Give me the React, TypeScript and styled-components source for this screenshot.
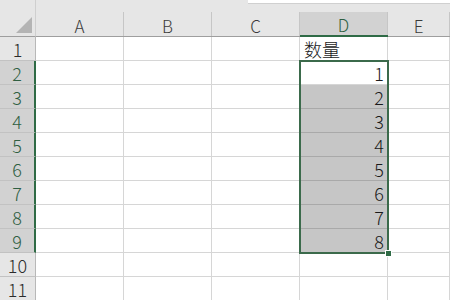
import React from "react";
import styled, { createGlobalStyle } from "styled-components";

const GlobalStyle = createGlobalStyle`
  html, body {
    margin: 0;
    padding: 0;
    background: #ffffff;
    overflow: hidden;
  }
  body {
    font-family: "Noto Sans CJK SC", "Noto Sans", "Liberation Sans", sans-serif;
    font-weight: 300;
  }
`;

const COLUMNS = ["A", "B", "C", "D", "E"];
const ROWS = [1, 2, 3, 4, 5, 6, 7, 8, 9, 10, 11];
const SEL_COL = "D";
const SEL_FIRST = 2;
const SEL_LAST = 9;

const Sheet = styled.div`
  position: relative;
  width: 450px;
  height: 300px;
  display: grid;
  grid-template-columns: 36px 88px 88px 88px 88px 62px;
  grid-template-rows: 37px repeat(11, 24px);
  overflow: hidden;
`;

const Corner = styled.div`
  background: #e6e6e6;
  border-right: 1px solid #cfcfcf;
  border-bottom: 1px solid #9e9e9e;
  box-sizing: border-box;
  display: flex;
  align-items: flex-end;
  justify-content: flex-end;
  padding: 0 3px 3px 0;
`;

const ColHead = styled.div<{ $active?: boolean; $tab?: number }>`
  background: #e6e6e6;
  box-sizing: border-box;
  padding-top: 12px;
  border-bottom: ${({ $active }) =>
    $active ? "2px solid #2f6b46" : "1px solid #9e9e9e"};
  position: relative;

  &::before {
    content: "";
    display: ${({ $tab }) => ($tab !== undefined ? "block" : "none")};
    position: absolute;
    left: ${({ $tab }) => $tab ?? 0}px;
    right: 0;
    top: 0;
    height: 3px;
    background: #ffffff;
    border-bottom: 1px solid #d0d0d0;
  }
`;

const ColLabel = styled.div<{ $active?: boolean }>`
  height: 100%;
  box-sizing: border-box;
  border-right: 1px solid #c6c6c6;
  background: ${({ $active }) => ($active ? "#d2d2d2" : "transparent")};
  color: ${({ $active }) => ($active ? "#2f5f42" : "#3a3a3a")};
  font-size: 17px;
  display: flex;
  align-items: center;
  justify-content: center;
  padding-top: 2px;
`;

const RowHead = styled.div<{ $active?: boolean }>`
  box-sizing: border-box;
  background: ${({ $active }) => ($active ? "#d2d2d2" : "#e6e6e6")};
  color: ${({ $active }) => ($active ? "#2f5f42" : "#2b2b2b")};
  border-bottom: 1px solid #c2c2c2;
  border-right: ${({ $active }) =>
    $active ? "2px solid #2f6b46" : "1px solid #b8b8b8"};
  font-size: 18px;
  display: flex;
  align-items: center;
  justify-content: center;
  line-height: 1;
  padding-top: 1px;
`;

const Cell = styled.div<{ $fill?: boolean; $align?: "left" | "right" }>`
  box-sizing: border-box;
  background: ${({ $fill }) => ($fill ? "#c6c6c6" : "#ffffff")};
  border-right: 1px solid #d6d6d6;
  border-bottom: 1px solid ${({ $fill }) => ($fill ? "#a9a9a9" : "#d6d6d6")};
  font-size: 18px;
  color: #1a1a1a;
  display: flex;
  align-items: flex-end;
  justify-content: ${({ $align }) =>
    $align === "right" ? "flex-end" : "flex-start"};
  padding: 0 3px 0 4px;
  line-height: 21px;
`;

const Selection = styled.div`
  position: absolute;
  left: 299px;
  top: 60px;
  width: 90px;
  height: 194px;
  box-sizing: border-box;
  border: 2px solid #3b6a4b;
  pointer-events: none;
`;

const Handle = styled.div`
  position: absolute;
  right: -5px;
  bottom: -5px;
  width: 5px;
  height: 5px;
  background: #2f6b46;
  border: 1px solid #ffffff;
`;

const Triangle = () => (
  <svg width="16" height="16" viewBox="0 0 16 16">
    <polygon points="16,0 16,16 0,16" fill="#b4b4b4" />
  </svg>
);

const values: Record<string, string> = {
  D1: "数量",
  D2: "1",
  D3: "2",
  D4: "3",
  D5: "4",
  D6: "5",
  D7: "6",
  D8: "7",
  D9: "8",
};

const tabStart: Record<string, number> = { C: 36, D: 0, E: 0 };

const App: React.FC = () => {
  const inSel = (col: string, row: number) =>
    col === SEL_COL && row >= SEL_FIRST && row <= SEL_LAST;

  return (
    <>
      <GlobalStyle />
      <Sheet>
        <Corner>
          <Triangle />
        </Corner>
        {COLUMNS.map((col) => (
          <ColHead
            key={`head-${col}`}
            $active={col === SEL_COL}
            $tab={tabStart[col]}
          >
            <ColLabel $active={col === SEL_COL}>{col}</ColLabel>
          </ColHead>
        ))}
        {ROWS.map((row) => (
          <React.Fragment key={`row-${row}`}>
            <RowHead $active={row >= SEL_FIRST && row <= SEL_LAST}>
              {row}
            </RowHead>
            {COLUMNS.map((col) => {
              const key = `${col}${row}`;
              const val = values[key];
              const numeric = val !== undefined && !isNaN(Number(val));
              return (
                <Cell
                  key={key}
                  $fill={inSel(col, row) && row !== SEL_FIRST}
                  $align={numeric ? "right" : "left"}
                >
                  {val}
                </Cell>
              );
            })}
          </React.Fragment>
        ))}
        <Selection>
          <Handle />
        </Selection>
      </Sheet>
    </>
  );
};

export default App;
